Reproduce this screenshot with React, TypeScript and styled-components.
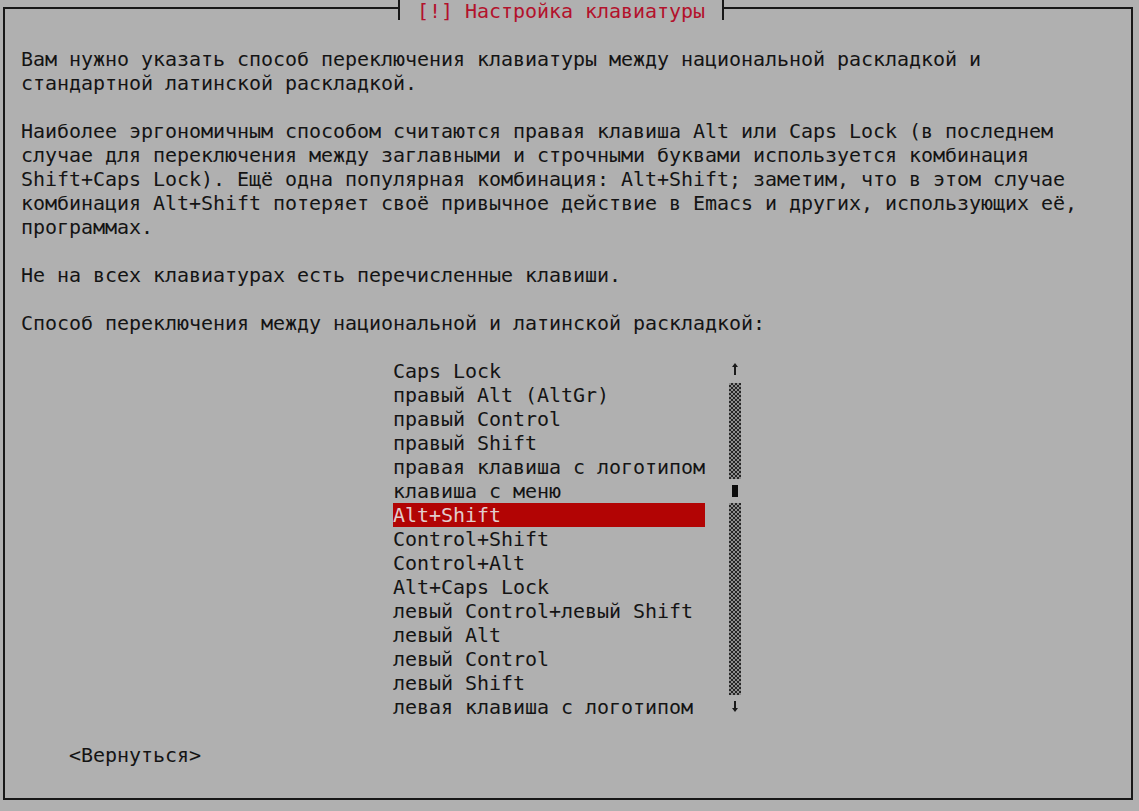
import React from "react";
import styled, { createGlobalStyle, css } from "styled-components";

const GlobalStyle = createGlobalStyle`
  html, body {
    margin: 0;
    padding: 0;
    background: #b0b0b0;
  }
  body {
    font-family: "DejaVu Sans Mono", "Liberation Mono", monospace;
  }
`;

const Screen = styled.div`
  width: 1139px;
  height: 811px;
  box-sizing: border-box;
  padding: 7px 0 0 3px;
  background: #b0b0b0;
  overflow: hidden;
  font-family: "DejaVu Sans Mono", "Liberation Mono", monospace;
  font-size: 20px;
  letter-spacing: -0.04px;
  line-height: 24px;
  color: #141414;
`;

const Window = styled.div`
  width: 1130px;
  height: 793px;
  box-sizing: border-box;
  border: 2px solid #181818;
  display: flex;
  flex-direction: column;
`;

const TitleBar = styled.div`
  display: flex;
  align-self: flex-start;
  height: 24px;
  margin: -10px 0 0 388px;
  background: #b0b0b0;
`;

const TitleText = styled.span`
  white-space: pre;
  color: #b3122c;
`;

const TickSvg = styled.svg`
  display: block;
  width: 12px;
  height: 24px;
  flex: none;
`;

const Tick: React.FC<{ side: "left" | "right" }> = ({ side }) => (
  <TickSvg viewBox="0 0 12 24">
    <rect x={5} y={1} width={2} height={20} fill="#181818" />
    {side === "left" ? (
      <rect x={0} y={8} width={7} height={2} fill="#181818" />
    ) : (
      <rect x={5} y={8} width={7} height={2} fill="#181818" />
    )}
  </TickSvg>
);

const Body = styled.div`
  padding: 24px 0 0 16px;
  display: flex;
  flex-direction: column;
`;

const Para = styled.div`
  margin: 0 0 24px;
`;

const Line = styled.div`
  height: 24px;
  white-space: pre;
`;

const ListArea = styled.div`
  display: flex;
  gap: 24px;
  margin-left: 372px;
`;

const Items = styled.div`
  width: 312px;
  display: flex;
  flex-direction: column;
`;

const Item = styled.div<{ $selected?: boolean }>`
  height: 24px;
  white-space: pre;
  ${(p) =>
    p.$selected &&
    css`
      background: #b20404;
      color: #e2cccc;
    `}
`;

const ScrollBar = styled.div`
  width: 12px;
  display: flex;
  flex-direction: column;
`;

const TrackCell = styled.div`
  height: 24px;
  background-color: #8e8e8e;
  background-image: conic-gradient(
    #262626 25%,
    transparent 0 50%,
    #262626 0 75%,
    transparent 0
  );
  background-size: 4px 4px;
`;

const ThumbCell = styled.div`
  height: 24px;
  display: flex;
  justify-content: center;
  align-items: center;
  padding-bottom: 0;
`;

const ThumbBlock = styled.div`
  width: 6px;
  height: 12px;
  background: #0c0c0c;
`;

const ArrowSvg = styled.svg`
  display: block;
  width: 12px;
  height: 24px;
`;

const Arrow: React.FC<{ dir: "up" | "down" }> = ({ dir }) => (
  <ArrowSvg viewBox="0 0 12 24">
    {dir === "up" ? (
      <g fill="#1a1a1a">
        <rect x={5} y={6} width={2} height={10} />
        <polygon points="6,4 9,8 3,8" />
      </g>
    ) : (
      <g fill="#1a1a1a">
        <rect x={5} y={6} width={2} height={9} />
        <polygon points="6,17 9,13 3,13" />
      </g>
    )}
  </ArrowSvg>
);

const ButtonRow = styled.div`
  margin-top: 24px;
  padding-left: 48px;
  height: 24px;
  white-space: pre;
`;

const paragraphs: string[][] = [
  [
    "Вам нужно указать способ переключения клавиатуры между национальной раскладкой и",
    "стандартной латинской раскладкой.",
  ],
  [
    "Наиболее эргономичным способом считаются правая клавиша Alt или Caps Lock (в последнем",
    "случае для переключения между заглавными и строчными буквами используется комбинация",
    "Shift+Caps Lock). Ещё одна популярная комбинация: Alt+Shift; заметим, что в этом случае",
    "комбинация Alt+Shift потеряет своё привычное действие в Emacs и других, использующих её,",
    "программах.",
  ],
  ["Не на всех клавиатурах есть перечисленные клавиши."],
  ["Способ переключения между национальной и латинской раскладкой:"],
];

const options = [
  "Caps Lock",
  "правый Alt (AltGr)",
  "правый Control",
  "правый Shift",
  "правая клавиша с логотипом",
  "клавиша с меню",
  "Alt+Shift",
  "Control+Shift",
  "Control+Alt",
  "Alt+Caps Lock",
  "левый Control+левый Shift",
  "левый Alt",
  "левый Control",
  "левый Shift",
  "левая клавиша с логотипом",
];

const selectedIndex = 6;
const thumbIndex = 5;

export default function App() {
  return (
    <>
      <GlobalStyle />
      <Screen>
        <Window>
          <TitleBar>
            <Tick side="left" />
            <TitleText> [!] Настройка клавиатуры </TitleText>
            <Tick side="right" />
          </TitleBar>
          <Body>
            {paragraphs.map((lines, i) => (
              <Para key={i}>
                {lines.map((l, j) => (
                  <Line key={j}>{l}</Line>
                ))}
              </Para>
            ))}
            <ListArea>
              <Items>
                {options.map((o, i) => (
                  <Item key={o} $selected={i === selectedIndex}>
                    {o}
                  </Item>
                ))}
              </Items>
              <ScrollBar>
                {options.map((_, i) => {
                  if (i === 0) return <Arrow key={i} dir="up" />;
                  if (i === options.length - 1) return <Arrow key={i} dir="down" />;
                  if (i === thumbIndex)
                    return (
                      <ThumbCell key={i}>
                        <ThumbBlock />
                      </ThumbCell>
                    );
                  return <TrackCell key={i} />;
                })}
              </ScrollBar>
            </ListArea>
            <ButtonRow>{"<Вернуться>"}</ButtonRow>
          </Body>
        </Window>
      </Screen>
    </>
  );
}
